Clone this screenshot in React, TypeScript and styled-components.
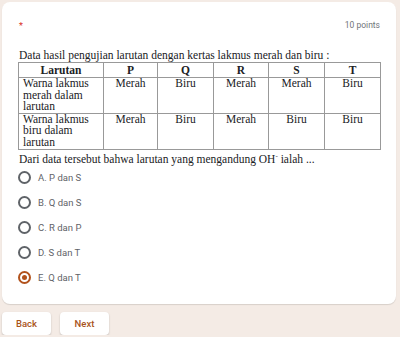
import React from "react";
import styled, { createGlobalStyle } from "styled-components";

const GlobalStyle = createGlobalStyle`
  body {
    margin: 0;
    background: #f4ebe5;
    font-family: Roboto, "Liberation Sans", sans-serif;
  }
`;

const Page = styled.div`
  padding: 2px 4px 0 2px;
  display: flex;
  flex-direction: column;
`;

const Card = styled.div`
  background: #fff;
  border-radius: 8px;
  box-shadow: 0 1px 1px rgba(0, 0, 0, 0.12);
  padding: 17px 16px 12px 17px;
  height: 302px;
  box-sizing: border-box;
`;

const Header = styled.div`
  display: flex;
  justify-content: space-between;
  align-items: flex-start;
  height: 30px;
`;

const Star = styled.span`
  color: #d93025;
  font-size: 9px;
  line-height: 10px;
  margin-top: 2px;
`;

const Points = styled.span`
  color: #70757a;
  font-size: 8.5px;
  margin-top: 1px;
`;

const Question = styled.div`
  font-family: "Liberation Serif", serif;
  font-size: 11.5px;
  color: #202124;
  line-height: 13px;
`;

const Table = styled.table`
  border-collapse: collapse;
  width: 363px;
  margin-left: -1px;
  table-layout: fixed;
  font-family: "Liberation Serif", serif;
  font-size: 11.5px;
  color: #202124;
`;

const Th = styled.th<{ $w: number }>`
  box-sizing: border-box;
  border: 1px solid #999;
  height: 15px;
  padding: 0 2px;
  font-weight: bold;
  line-height: 13px;
  width: ${(p) => p.$w}px;
`;

const Td = styled.td<{ $left?: boolean }>`
  border: 1px solid #999;
  height: 34px;
  padding: 0 4px;
  vertical-align: top;
  line-height: 11.6px;
  text-align: ${(p) => (p.$left ? "left" : "center")};
`;

const Options = styled.div`
  display: flex;
  flex-direction: column;
  gap: 7px;
  margin: 3px 0 0 -1px;
`;

const Option = styled.label`
  display: flex;
  align-items: center;
  gap: 7px;
  height: 18px;
  font-size: 9.5px;
  color: #5f6368;
`;

const Radio = styled.span<{ $checked?: boolean }>`
  width: 13px;
  height: 13px;
  border-radius: 50%;
  box-sizing: border-box;
  border: 2px solid ${(p) => (p.$checked ? "#b2521c" : "#5f6368")};
  display: flex;
  align-items: center;
  justify-content: center;
  &::after {
    content: "";
    width: 5px;
    height: 5px;
    border-radius: 50%;
    background: ${(p) => (p.$checked ? "#b2521c" : "transparent")};
  }
`;

const Buttons = styled.div`
  display: flex;
  gap: 9px;
  margin-top: 8px;
`;

const Button = styled.button`
  width: 49px;
  height: 23px;
  background: #fff;
  border: none;
  border-radius: 4px;
  box-shadow: 0 1px 2px rgba(0, 0, 0, 0.2);
  color: #a9541b;
  font-family: Roboto, sans-serif;
  font-size: 9.5px;
  font-weight: 500;
`;

const columns = [
  { name: "Larutan", w: 85 },
  { name: "P", w: 54 },
  { name: "Q", w: 56 },
  { name: "R", w: 55 },
  { name: "S", w: 56 },
  { name: "T", w: 56 },
];

const rows = [
  { label: "Warna lakmus merah dalam larutan", vals: ["Merah", "Biru", "Merah", "Merah", "Biru"] },
  { label: "Warna lakmus biru dalam larutan", vals: ["Merah", "Biru", "Merah", "Biru", "Biru"] },
];

const options = ["A. P dan S", "B. Q dan S", "C. R dan P", "D. S dan T", "E. Q dan T"];

export default function App() {
  return (
    <>
      <GlobalStyle />
      <Page>
        <Card>
          <Header>
            <Star>*</Star>
            <Points>10 points</Points>
          </Header>
          <Question>Data hasil pengujian larutan dengan kertas lakmus merah dan biru :</Question>
          <Table>
            <thead>
              <tr>
                {columns.map((c) => (
                  <Th key={c.name} $w={c.w}>
                    {c.name}
                  </Th>
                ))}
              </tr>
            </thead>
            <tbody>
              {rows.map((r) => (
                <tr key={r.label}>
                  <Td $left>{r.label}</Td>
                  {r.vals.map((v, i) => (
                    <Td key={i}>{v}</Td>
                  ))}
                </tr>
              ))}
            </tbody>
          </Table>
          <Question>
            Dari data tersebut bahwa larutan yang mengandung OH<sup style={{ fontSize: 7 }}>-</sup> ialah ...
          </Question>
          <Options>
            {options.map((o, i) => (
              <Option key={o}>
                <Radio $checked={i === 4} />
                {o}
              </Option>
            ))}
          </Options>
        </Card>
        <Buttons>
          <Button>Back</Button>
          <Button>Next</Button>
        </Buttons>
      </Page>
    </>
  );
}
